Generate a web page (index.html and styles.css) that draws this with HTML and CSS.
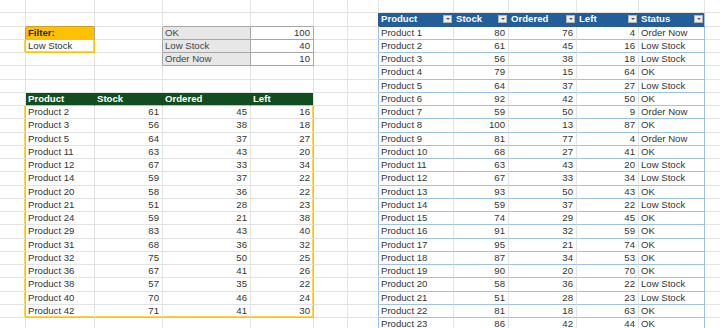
FILE: index.html
```html
<!DOCTYPE html>
<html lang="en">
<head>
    <meta charset="UTF-8">
    <title>Stock filter</title>
    <link rel="stylesheet" href="styles.css">
</head>
<body>

<table class="sheet">
    <colgroup>
        <col style="width:26px"><col style="width:69px"><col style="width:68px"><col style="width:88px">
        <col style="width:63px"><col style="width:34px"><col style="width:31px"><col style="width:75px">
        <col style="width:55px"><col style="width:68px"><col style="width:62px"><col style="width:66px">
        <col style="width:20px">
    </colgroup>
    <!-- row 1 -->
    <tr><td></td><td></td><td></td><td></td><td></td><td></td><td></td><td></td><td></td><td></td><td></td><td></td><td></td></tr>
    <!-- row 2: stock table header -->
    <tr><td></td><td class="fb"></td><td></td><td class="gb"></td><td class="gb"></td><td></td><td class="hl"></td>
        <td class="bh"><div class="hd">Product<span class="dd"></span></div></td>
        <td class="bh"><div class="hd">Stock<span class="dd"></span></div></td>
        <td class="bh"><div class="hd">Ordered<span class="dd"></span></div></td>
        <td class="bh"><div class="hd">Left<span class="dd"></span></div></td>
        <td class="bh last"><div class="hd">Status<span class="dd"></span></div></td><td></td></tr>
    <!-- row 3 -->
    <tr><td class="fl-left"></td><td class="fl">Filter:</td><td class="gr"></td><td class="lk">OK</td><td class="lv n">100</td><td></td><td class="br"></td>
        <td class="bb">Product 1</td><td class="bb n">80</td><td class="bb n">76</td><td class="bb n">4</td><td class="bb br">Order Now</td><td></td></tr>
    <!-- row 4 -->
    <tr><td class="yr"></td><td class="fv">Low Stock</td><td class="gr"></td><td class="lk">Low Stock</td><td class="lv n">40</td><td></td><td class="br"></td>
        <td class="bb">Product 2</td><td class="bb n">61</td><td class="bb n">45</td><td class="bb n">16</td><td class="bb br">Low Stock</td><td></td></tr>
    <!-- row 5 -->
    <tr><td></td><td></td><td class="gr"></td><td class="lk">Order Now</td><td class="lv n">10</td><td></td><td class="br"></td>
        <td class="bb">Product 3</td><td class="bb n">56</td><td class="bb n">38</td><td class="bb n">18</td><td class="bb br">Low Stock</td><td></td></tr>
    <!-- row 6 -->
    <tr><td></td><td></td><td></td><td></td><td></td><td></td><td class="br"></td>
        <td class="bb">Product 4</td><td class="bb n">79</td><td class="bb n">15</td><td class="bb n">64</td><td class="bb br">OK</td><td></td></tr>
    <!-- row 7 -->
    <tr><td></td><td></td><td></td><td></td><td></td><td></td><td class="br"></td>
        <td class="bb">Product 5</td><td class="bb n">64</td><td class="bb n">37</td><td class="bb n">27</td><td class="bb br">Low Stock</td><td></td></tr>
    <!-- row 8: filtered table header -->
    <tr><td></td><td class="gh">Product</td><td class="gh">Stock</td><td class="gh">Ordered</td><td class="gh gh-end">Left</td><td></td><td class="br"></td>
        <td class="bb">Product 6</td><td class="bb n">92</td><td class="bb n">42</td><td class="bb n">50</td><td class="bb br">OK</td><td></td></tr>
    <!-- rows 9-24 -->
    <tr><td class="yr"></td><td>Product 2</td><td class="n">61</td><td class="n">45</td><td class="n yr">16</td><td></td><td class="br"></td>
        <td class="bb">Product 7</td><td class="bb n">59</td><td class="bb n">50</td><td class="bb n">9</td><td class="bb br">Order Now</td><td></td></tr>
    <tr><td class="yr"></td><td>Product 3</td><td class="n">56</td><td class="n">38</td><td class="n yr">18</td><td></td><td class="br"></td>
        <td class="bb">Product 8</td><td class="bb n">100</td><td class="bb n">13</td><td class="bb n">87</td><td class="bb br">OK</td><td></td></tr>
    <tr><td class="yr"></td><td>Product 5</td><td class="n">64</td><td class="n">37</td><td class="n yr">27</td><td></td><td class="br"></td>
        <td class="bb">Product 9</td><td class="bb n">81</td><td class="bb n">77</td><td class="bb n">4</td><td class="bb br">Order Now</td><td></td></tr>
    <tr><td class="yr"></td><td>Product 11</td><td class="n">63</td><td class="n">43</td><td class="n yr">20</td><td></td><td class="br"></td>
        <td class="bb">Product 10</td><td class="bb n">68</td><td class="bb n">27</td><td class="bb n">41</td><td class="bb br">OK</td><td></td></tr>
    <tr><td class="yr"></td><td>Product 12</td><td class="n">67</td><td class="n">33</td><td class="n yr">34</td><td></td><td class="br"></td>
        <td class="bb">Product 11</td><td class="bb n">63</td><td class="bb n">43</td><td class="bb n">20</td><td class="bb br">Low Stock</td><td></td></tr>
    <tr><td class="yr"></td><td>Product 14</td><td class="n">59</td><td class="n">37</td><td class="n yr">22</td><td></td><td class="br"></td>
        <td class="bb">Product 12</td><td class="bb n">67</td><td class="bb n">33</td><td class="bb n">34</td><td class="bb br">Low Stock</td><td></td></tr>
    <tr><td class="yr"></td><td>Product 20</td><td class="n">58</td><td class="n">36</td><td class="n yr">22</td><td></td><td class="br"></td>
        <td class="bb">Product 13</td><td class="bb n">93</td><td class="bb n">50</td><td class="bb n">43</td><td class="bb br">OK</td><td></td></tr>
    <tr><td class="yr"></td><td>Product 21</td><td class="n">51</td><td class="n">28</td><td class="n yr">23</td><td></td><td class="br"></td>
        <td class="bb">Product 14</td><td class="bb n">59</td><td class="bb n">37</td><td class="bb n">22</td><td class="bb br">Low Stock</td><td></td></tr>
    <tr><td class="yr"></td><td>Product 24</td><td class="n">59</td><td class="n">21</td><td class="n yr">38</td><td></td><td class="br"></td>
        <td class="bb">Product 15</td><td class="bb n">74</td><td class="bb n">29</td><td class="bb n">45</td><td class="bb br">OK</td><td></td></tr>
    <tr><td class="yr"></td><td>Product 29</td><td class="n">83</td><td class="n">43</td><td class="n yr">40</td><td></td><td class="br"></td>
        <td class="bb">Product 16</td><td class="bb n">91</td><td class="bb n">32</td><td class="bb n">59</td><td class="bb br">OK</td><td></td></tr>
    <tr><td class="yr"></td><td>Product 31</td><td class="n">68</td><td class="n">36</td><td class="n yr">32</td><td></td><td class="br"></td>
        <td class="bb">Product 17</td><td class="bb n">95</td><td class="bb n">21</td><td class="bb n">74</td><td class="bb br">OK</td><td></td></tr>
    <tr><td class="yr"></td><td>Product 32</td><td class="n">75</td><td class="n">50</td><td class="n yr">25</td><td></td><td class="br"></td>
        <td class="bb">Product 18</td><td class="bb n">87</td><td class="bb n">34</td><td class="bb n">53</td><td class="bb br">OK</td><td></td></tr>
    <tr><td class="yr"></td><td>Product 36</td><td class="n">67</td><td class="n">41</td><td class="n yr">26</td><td></td><td class="br"></td>
        <td class="bb">Product 19</td><td class="bb n">90</td><td class="bb n">20</td><td class="bb n">70</td><td class="bb br">OK</td><td></td></tr>
    <tr><td class="yr"></td><td>Product 38</td><td class="n">57</td><td class="n">35</td><td class="n yr">22</td><td></td><td class="br"></td>
        <td class="bb">Product 20</td><td class="bb n">58</td><td class="bb n">36</td><td class="bb n">22</td><td class="bb br">Low Stock</td><td></td></tr>
    <tr><td class="yr"></td><td>Product 40</td><td class="n">70</td><td class="n">46</td><td class="n yr">24</td><td></td><td class="br"></td>
        <td class="bb">Product 21</td><td class="bb n">51</td><td class="bb n">28</td><td class="bb n">23</td><td class="bb br">Low Stock</td><td></td></tr>
    <tr><td class="yr"></td><td class="yb">Product 42</td><td class="n yb">71</td><td class="n yb">41</td><td class="n yr yb">30</td><td></td><td class="br"></td>
        <td class="bb">Product 22</td><td class="bb n">81</td><td class="bb n">18</td><td class="bb n">63</td><td class="bb br">OK</td><td></td></tr>
    <!-- row 25 -->
    <tr><td></td><td></td><td></td><td></td><td></td><td></td><td class="br"></td>
        <td class="bb">Product 23</td><td class="bb n">86</td><td class="bb n">42</td><td class="bb n">44</td><td class="bb br">OK</td><td></td></tr>
</table>

</body>
</html>
```

FILE: styles.css
```css
body {
    margin: 0;
    background-color: #ffffff;
    overflow: hidden;
    font-family: "Liberation Sans", Arial, sans-serif;
}
.sheet {
    border-collapse: separate;
    border-spacing: 0;
    table-layout: fixed;
    width: 725px;
    font-size: 9.6px;
    color: #333333;
}
.sheet tr {
    height: 13.25px;
}
.sheet td {
    padding: 0 2px;
    line-height: 12px;
    white-space: nowrap;
    overflow: hidden;
    border-right: 1px solid #e3e3e3;
    border-bottom: 1px solid #e3e3e3;
}
.sheet td.n {
    text-align: right;
    padding-right: 3px;
}

/* filter cells */
.fb {
    border-bottom-color: #c9a227 !important;
}
.fl-left {
    border-right-color: #c9a227 !important;
}
.fl {
    background-color: #ffc000;
    font-weight: bold;
    color: #2b2b2b;
    border-right-color: #a6a6a6 !important;
    border-bottom-color: #ffc000 !important;
}
.fv {
    border-right-color: #ffc000 !important;
    border-bottom-color: #ffc000 !important;
    box-shadow: inset -1px -1px 0 #ffd54a;
}

/* lookup table */
.gb {
    border-bottom-color: #a6a6a6 !important;
}
.gr {
    border-right-color: #a6a6a6 !important;
}
.lk {
    background-color: #e7e7e7;
    color: #444444;
    border-right-color: #a6a6a6 !important;
    border-bottom-color: #a6a6a6 !important;
}
.lv {
    border-right-color: #a6a6a6 !important;
    border-bottom-color: #a6a6a6 !important;
}

/* filtered table */
.gh {
    background-color: #114d1e;
    color: #ffffff;
    font-weight: bold;
    border-right-color: #114d1e !important;
    border-bottom-color: #ffc000 !important;
}
.gh-end {
    border-right-color: #e3e3e3 !important;
}
.yr {
    border-right-color: #ffc000 !important;
    box-shadow: inset -1px 0 0 #ffd54a;
}
.yb {
    border-bottom-color: #ffc000 !important;
    box-shadow: inset 0 -1px 0 #ffd54a;
}
.yr.yb {
    box-shadow: inset -1px -1px 0 #ffd54a;
}

/* stock table */
.hl {
    border-right-color: #235d9a !important;
}
.bh {
    background-color: #235d9a;
    color: #ffffff;
    font-weight: bold;
    border-right-color: #235d9a !important;
    border-bottom-color: #235d9a !important;
}
.bh.last {
    border-right-color: #9cc3e5 !important;
}
.hd {
    display: flex;
    align-items: center;
    justify-content: space-between;
    margin-right: -1px;
}
.dd {
    width: 9px;
    height: 8px;
    box-sizing: border-box;
    background-color: #eeeeee;
    border: 1px solid #b4b4b4;
    display: flex;
    align-items: center;
    justify-content: center;
}
.dd::after {
    content: "";
    border-left: 2px solid transparent;
    border-right: 2px solid transparent;
    border-top: 2px solid #555555;
}
.br {
    border-right-color: #9cc3e5 !important;
}
.bb {
    border-bottom-color: #9cc3e5 !important;
}
```
